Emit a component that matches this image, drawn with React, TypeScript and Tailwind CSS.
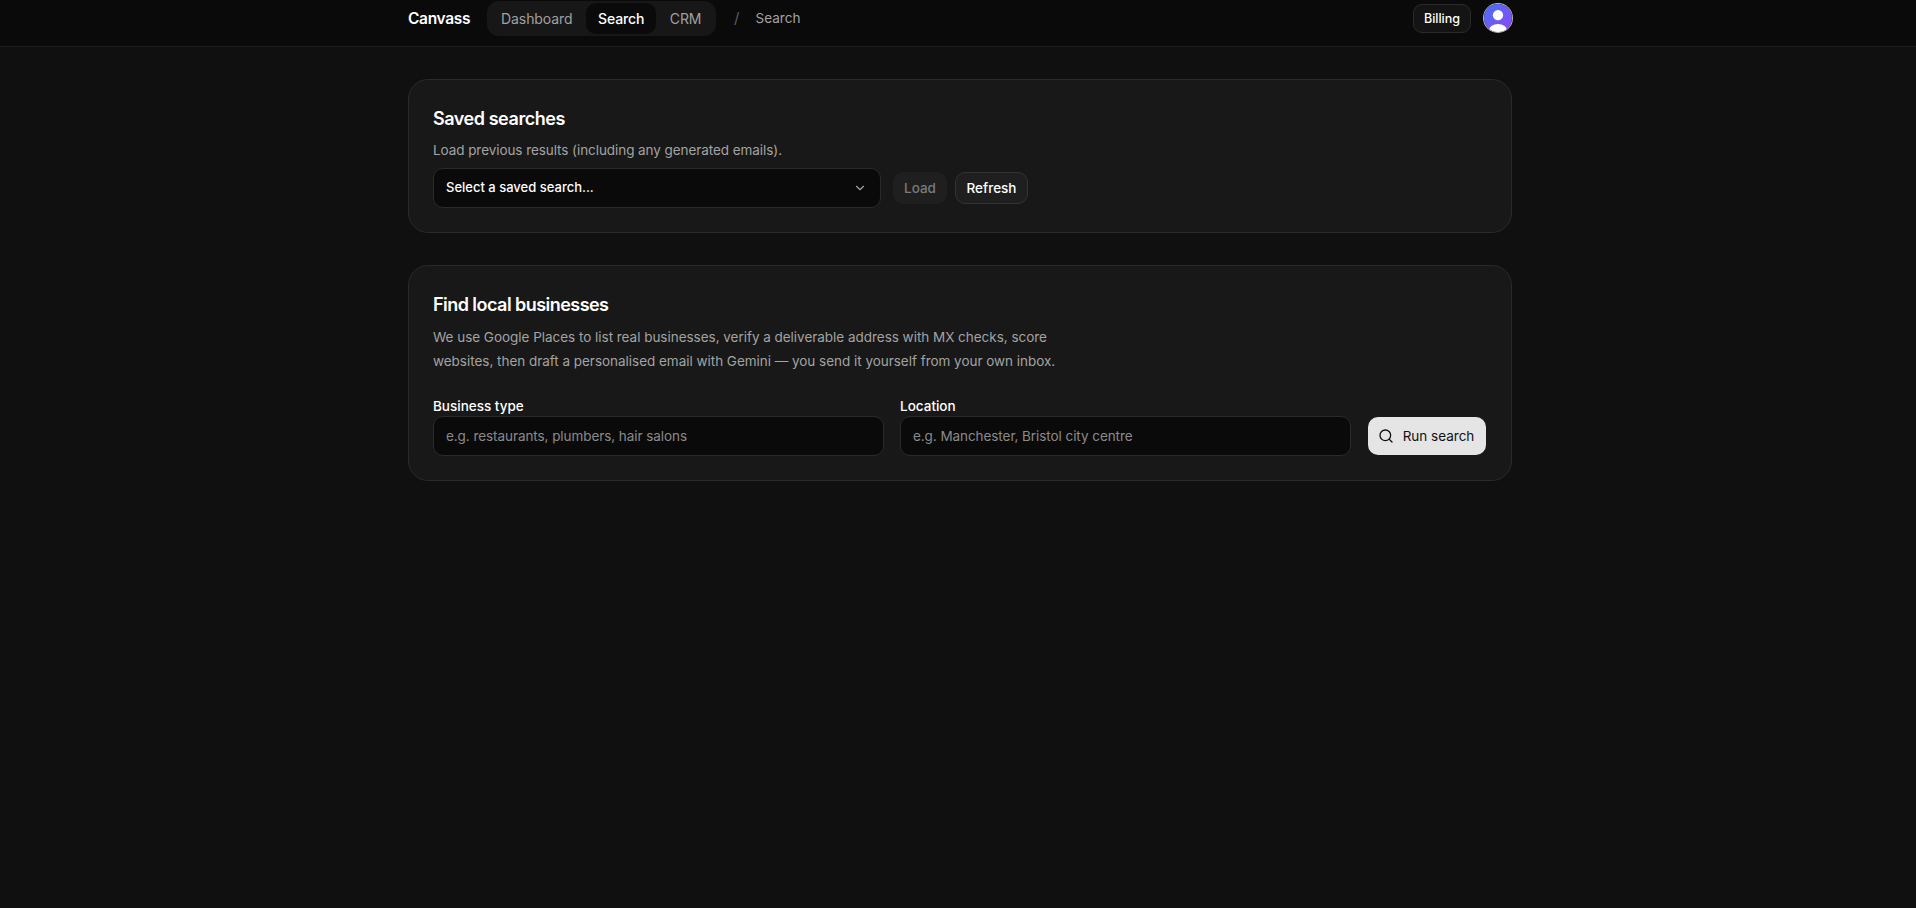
import { ChevronDown, Search } from "lucide-react";

const navigation = [
  { name: "Dashboard", active: false },
  { name: "Search", active: true },
  { name: "CRM", active: false },
];

function Header() {
  return (
    <header className="h-[47px] border-b border-[#1e1e1e] bg-[#0a0a0a]">
      <div className="ml-[408px] flex h-[37px] w-[1104px] items-center justify-between">
        <div className="flex items-center">
          <span className="w-[79px] text-[15.5px] font-semibold tracking-[-0.02em] text-white">Canvass</span>
          <nav className="flex h-[35px] w-[229px] items-center gap-[1.5px] self-start rounded-[12px] bg-[#171717] px-[2px]">
            {navigation.map((item) => (
              <a
                key={item.name}
                className={
                  item.active
                    ? "flex h-[31px] items-center rounded-[10px] bg-[#0a0a0a] px-3 text-[14px] font-medium tracking-[-0.01em] text-white"
                    : "flex h-[31px] items-center rounded-[10px] px-3 text-[14px] tracking-[-0.005em] text-[#a0a0a0]"
                }
              >
                {item.name}
              </a>
            ))}
          </nav>
          <span className="ml-[18px] text-[15px] text-[#5c5c5c]">/</span>
          <span className="ml-[16px] text-[13.5px] tracking-[0.005em] text-[#a3a3a3]">Search</span>
        </div>
        <div className="flex h-[36px] items-center gap-[13px] self-start">
          <button className="flex h-[29px] w-[58px] items-center justify-center rounded-[9px] border border-[#2a2a2a] bg-[#141414] pt-[2px] text-[12.5px] font-medium text-white">
            Billing
          </button>
          <div className="h-[28px] w-[28px] overflow-hidden rounded-full bg-gradient-to-br from-[#3f6df6] to-[#8b45f5] ring-1 ring-white/70">
            <svg viewBox="0 0 30 30" className="h-full w-full">
              <circle cx="15" cy="12" r="5.5" fill="#fff" />
              <ellipse cx="15" cy="28" rx="9.5" ry="6.5" fill="#fff" />
            </svg>
          </div>
        </div>
      </div>
    </header>
  );
}

function App() {
  return (
    <div className="min-h-[908px] bg-[#101010] font-['Inter',sans-serif]">
      <Header />
      <main className="ml-[408px] flex w-[1104px] flex-col gap-[32px] pt-[32px]">
        <section className="h-[154px] rounded-[20px] border border-[#2a2a2a] bg-[#181818] px-[24px] pt-[26px]">
          <h2 className="text-[18px] leading-[26px] font-semibold tracking-[-0.025em] text-white">Saved searches</h2>
          <p className="mt-[8px] text-[13.5px] leading-[20px] tracking-[-0.005em] text-[#a3a3a3]">
            Load previous results (including any generated emails).
          </p>
          <div className="mt-[8px] flex items-center">
            <button className="flex h-[40px] w-[448px] items-center justify-between rounded-[10px] border border-[#2a2a2a] bg-[#0a0a0a] pr-[13px] pl-[12px] text-[13px] font-medium text-white">
              Select a saved search...
              <ChevronDown className="h-[14px] w-[14px] text-[#a3a3a3]" />
            </button>
            <button className="ml-[12px] h-[32px] w-[54px] rounded-[10px] bg-[#1f1f1f] text-[13.5px] font-medium text-[#7a7a7a]">
              Load
            </button>
            <button className="ml-[8px] h-[32px] w-[73px] rounded-[10px] border border-[#333333] bg-[#1f1f1f] text-[13.5px] font-medium text-white">
              Refresh
            </button>
          </div>
        </section>
        <section className="h-[216px] rounded-[20px] border border-[#2a2a2a] bg-[#181818] px-[24px] pt-[26px]">
          <h2 className="text-[18px] leading-[26px] font-semibold tracking-[-0.03em] text-white">
            Find local businesses
          </h2>
          <p className="mt-[7px] w-[660px] text-[13.5px] leading-[24px] tracking-[-0.002em] text-[#a3a3a3]">
            We use Google Places to list real businesses, verify a deliverable address with MX checks, score websites,
            then draft a personalised email with Gemini — you send it yourself from your own inbox.
          </p>
          <div className="mt-[23px] flex items-end gap-[16px]">
            <label className="block w-[451px]">
              <span className="block text-[13.5px] leading-[20px] font-medium text-white">Business type</span>
              <input
                placeholder="e.g. restaurants, plumbers, hair salons"
                className="h-[40px] w-full rounded-[10px] border border-[#2a2a2a] bg-[#0a0a0a] px-[12px] text-[13.5px] tracking-[-0.005em] text-white outline-none placeholder:text-[#8a8a8a]"
              />
            </label>
            <label className="block w-[451px]">
              <span className="block text-[13.5px] leading-[20px] font-medium text-white">Location</span>
              <input
                placeholder="e.g. Manchester, Bristol city centre"
                className="h-[40px] w-full rounded-[10px] border border-[#2a2a2a] bg-[#0a0a0a] px-[12px] text-[13.5px] tracking-[-0.005em] text-white outline-none placeholder:text-[#8a8a8a]"
              />
            </label>
            <button className="mb-px ml-px flex h-[38px] w-[118px] items-center justify-center gap-[9px] rounded-[10px] bg-[#e5e5e5] pr-[2px] text-[13.5px] text-[#111111]">
              <Search className="h-[16px] w-[16px]" />
              Run search
            </button>
          </div>
        </section>
      </main>
    </div>
  );
}

export default App;
